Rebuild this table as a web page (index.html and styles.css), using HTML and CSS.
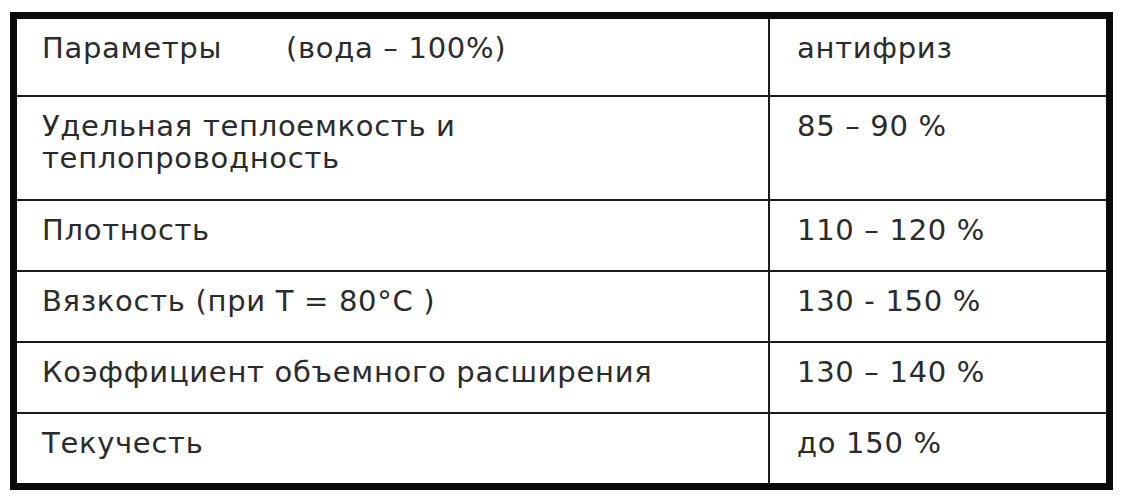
FILE: index.html
```html
<!DOCTYPE html>
<html lang="ru">
<head>
<meta charset="utf-8">
<title>Параметры антифриза</title>
<link rel="stylesheet" href="styles.css">
</head>
<body>
<table class="params">
  <colgroup>
    <col class="col-name">
    <col class="col-value">
  </colgroup>
  <tr class="row row-head">
    <td class="cell cell-name">Параметры<span class="note">(вода – 100%)</span></td>
    <td class="cell cell-value">антифриз</td>
  </tr>
  <tr class="row row-double">
    <td class="cell cell-name">Удельная теплоемкость и<br>теплопроводность</td>
    <td class="cell cell-value">85 – 90 %</td>
  </tr>
  <tr class="row">
    <td class="cell cell-name">Плотность</td>
    <td class="cell cell-value">110 – 120 %</td>
  </tr>
  <tr class="row">
    <td class="cell cell-name">Вязкость (при Т = 80°С )</td>
    <td class="cell cell-value">130 - 150 %</td>
  </tr>
  <tr class="row">
    <td class="cell cell-name">Коэффициент объемного расширения</td>
    <td class="cell cell-value">130 – 140 %</td>
  </tr>
  <tr class="row row-last">
    <td class="cell cell-name">Текучесть</td>
    <td class="cell cell-value">до 150 %</td>
  </tr>
</table>
</body>
</html>
```
FILE: styles.css
```css
html, body {
  background: #ffffff;
}

body {
  margin: 12px 0 0 10px;
  font-family: "DejaVu Sans", Verdana, sans-serif;
  color: #2b2b2b;
}

.params {
  width: 1103px;
  table-layout: fixed;
  border-collapse: separate;
  border-spacing: 0;
  border: 7px solid #0a0a0a;
}

.col-name {
  width: 753px;
}

.cell {
  box-sizing: border-box;
  vertical-align: top;
  font-size: 29px;
  line-height: 32px;
  letter-spacing: 0.7px;
  padding: 13px 10px 24px 25px;
  border-bottom: 2px solid #1c1c1c;
}

.cell-name {
  border-right: 2px solid #1c1c1c;
}

.cell-value {
  padding-left: 27px;
}

.row-head .cell {
  padding-bottom: 31px;
}

.row-double .cell {
  padding-bottom: 25px;
}

.row-last .cell {
  border-bottom: none;
}

.note {
  margin-left: 64px;
}
```
